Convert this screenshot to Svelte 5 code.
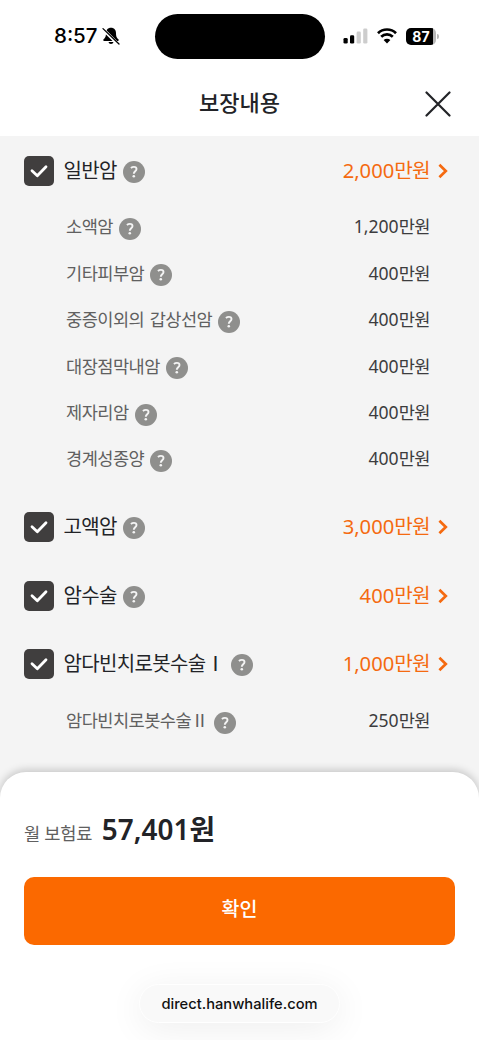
<script lang="ts">
  interface SubItem {
    name: string;
    amount: string;
  }

  interface Coverage extends SubItem {
    checked: boolean;
    subs: SubItem[];
  }

  let coverages: Coverage[] = $state([
    {
      name: '일반암',
      amount: '2,000',
      checked: true,
      subs: [
        { name: '소액암', amount: '1,200' },
        { name: '기타피부암', amount: '400' },
        { name: '중증이외의 갑상선암', amount: '400' },
        { name: '대장점막내암', amount: '400' },
        { name: '제자리암', amount: '400' },
        { name: '경계성종양', amount: '400' },
      ],
    },
    { name: '고액암', amount: '3,000', checked: true, subs: [] },
    { name: '암수술', amount: '400', checked: true, subs: [] },
    {
      name: '암다빈치로봇수술Ⅰ',
      amount: '1,000',
      checked: true,
      subs: [{ name: '암다빈치로봇수술Ⅱ', amount: '250' }],
    },
  ]);
</script>

{#snippet help()}
  <button class="help" aria-label="도움말">
    <svg viewBox="0 0 22 22" width="22" height="22">
      <circle cx="11" cy="11" r="11" fill="#8f8f8d" />
      <path d="M7.900 7C8.900 6.200 9.900 5.900 10.900 5.900c1.700 0 2.600.9 2.600 2.200 0 2.100-2.700 2.300-2.700 4.600" fill="none" stroke="#f4f4f4" stroke-width="1.900" />
      <circle cx="10.800" cy="15.300" r="1.300" fill="#f4f4f4" />
    </svg>
  </button>
{/snippet}

<div class="screen">
  <div class="status-bar">
    <div class="clock">
      <span>8:57</span>
      <svg viewBox="0 0 18 18" width="18" height="18">
        <path d="M9 .8c-3.1 0-5 2.200-5 5.200 0 3.800-.8 4.700-2.400 6.300-.7.8-.3 1.700.6 1.700h13.600c.9 0 1.300-.9.6-1.700C14.800 10.700 14 9.800 14 6c0-3-1.900-5.200-5-5.200zM6.500 15h5c-.3 1.300-1.200 2-2.500 2s-2.200-.7-2.500-2z" fill="#000" />
        <path d="M1 2.200 16 17.200" stroke="#fff" stroke-width="3.200" />
        <path d="M1 1.600 17 17" stroke="#000" stroke-width="1.300" stroke-linecap="round" />
      </svg>
    </div>
    <div class="island"></div>
    <div class="indicators">
      <svg class="signal" viewBox="0 0 25 16" width="25" height="16">
        <rect x="0.500" y="10" width="4.200" height="5.500" rx="1.300" />
        <rect x="7" y="7.200" width="4.200" height="8.300" rx="1.300" />
        <rect x="13.600" y="3.600" width="4.200" height="11.900" rx="1.300" fill="#cdcdcd" />
        <rect x="20.200" y="0.500" width="4.200" height="15" rx="1.300" fill="#cdcdcd" />
      </svg>
      <svg class="wifi" viewBox="0 0 20 16" width="20" height="16">
        <path d="M1 5.200a12.800 12.800 0 0 1 18 0M4.200 8.700a8.300 8.300 0 0 1 11.600 0" fill="none" stroke="#000" stroke-width="2.700" />
        <path d="M10 15.500 6.600 12.100a4.900 4.900 0 0 1 6.800 0z" />
      </svg>
      <div class="battery">
        <span class="level">87</span>
        <span class="cap"></span>
      </div>
    </div>
  </div>

  <header>
    <h1>보장내용</h1>
    <button class="close" aria-label="닫기">
      <svg viewBox="0 0 26 26" width="26" height="26">
        <path d="M1.500 1.500 24.500 24.500M24.500 1.500 1.500 24.500" stroke="#222327" stroke-width="2.200" stroke-linecap="round" />
      </svg>
    </button>
  </header>

  <main>
    {#each coverages as item}
      <section>
        <div class="row">
          <button
            class="check"
            class:on={item.checked}
            role="checkbox"
            aria-checked={item.checked}
            aria-label={item.name}
            onclick={() => (item.checked = !item.checked)}
          >
            <svg viewBox="0 0 30 30" width="30" height="30">
              <path d="M8 14.800 13.300 19.800 22 10.800" fill="none" stroke="#fff" stroke-width="2.800" stroke-linecap="round" stroke-linejoin="round" />
            </svg>
          </button>
          <span class="name">{item.name}</span>
          {@render help()}
          <span class="amount">{item.amount}<span class="unit">만원</span></span>
          <svg class="arrow" viewBox="0 0 10 16" width="10" height="16">
            <path d="M1.400 1.800 7.800 8 1.400 14.200" fill="none" stroke="#f56a10" stroke-width="2.700" />
          </svg>
        </div>
        {#if item.subs.length}
          <ul>
            {#each item.subs as sub}
              <li>
                <span class="name">{sub.name}</span>
                {@render help()}
                <span class="amount">{sub.amount}<span class="unit">만원</span></span>
              </li>
            {/each}
          </ul>
        {/if}
      </section>
    {/each}
  </main>

  <footer>
    <div class="premium">
      <span class="label">월 보험료</span>
      <strong>57,401<span>원</span></strong>
    </div>
    <button class="confirm">확인</button>
    <div class="address">direct.hanwhalife.com</div>
  </footer>
</div>

<style>
  :global(body) {
    margin: 0;
    background: #fff;
  }

  .screen {
    display: flex;
    flex-direction: column;
    width: 479px;
    height: 1040px;
    overflow: hidden;
    background: #f4f4f4;
    color: #222327;
    font-family: 'Noto Sans', 'Noto Sans CJK KR', sans-serif;
  }

  button {
    padding: 0;
    border: 0;
    background: none;
    font-family: inherit;
    cursor: pointer;
  }

  svg {
    display: block;
  }

  .status-bar {
    display: grid;
    grid-template-columns: 155px 170px 1fr;
    align-items: center;
    flex: none;
    height: 72px;
    background: #fff;
  }

  .clock {
    display: flex;
    align-items: center;
    gap: 4px;
    padding-left: 54px;
    color: #000;
    font: 500 20.5px/24px Inter, sans-serif;
  }

  .island {
    height: 45px;
    border-radius: 23px;
    background: #000;
  }

  .indicators {
    display: flex;
    align-items: center;
    padding-left: 18px;
  }

  .wifi {
    margin-left: 9px;
  }

  .battery {
    display: flex;
    align-items: center;
    gap: 1px;
    margin-left: 9px;
  }

  .level {
    width: 30px;
    height: 17px;
    border-radius: 5px;
    background: linear-gradient(90deg, #000 27px, #b8b8b8 27px);
    color: #fff;
    font: 700 14px/17px Inter, sans-serif;
    text-align: center;
  }

  .cap {
    width: 2px;
    height: 5px;
    border-radius: 0 2px 2px 0;
    background: #b8b8b8;
  }

  header {
    display: grid;
    grid-template-columns: 1fr auto 1fr;
    align-items: center;
    flex: none;
    height: 64.400px;
    background: #fff;
  }

  h1 {
    grid-column: 2;
    margin: 0;
    padding-bottom: 4px;
    font-size: 22px;
    font-weight: 500;
    line-height: 30px;
  }

  .close {
    justify-self: end;
    margin-right: 28px;
  }

  main {
    flex: none;
    height: 635.600px;
  }

  .row {
    display: flex;
    align-items: center;
    height: 68.500px;
    padding: 0 31px 0 24px;
  }

  .check {
    width: 30px;
    height: 30px;
    margin-right: 9.500px;
    border-radius: 5px;
    background: #c4c4c4;
  }

  .check.on {
    background: #403e3e;
  }

  .name {
    white-space: pre;
  }

  .row .name {
    font-size: 20px;
    line-height: 30px;
    letter-spacing: -0.65px;
  }

  .help {
    flex: none;
    width: 22px;
    height: 22px;
    margin: 2px 0 0 6px;
  }

  .amount {
    margin-left: auto;
  }

  .row .amount {
    padding-bottom: 2px;
    color: #f56a10;
    font-size: 20.200px;
    line-height: 30px;
  }

  .row .unit {
    letter-spacing: -0.7px;
  }

  .arrow {
    margin-left: 8px;
  }

  ul {
    margin: 0;
    padding: 0 0 10px;
    list-style: none;
  }

  li {
    display: flex;
    align-items: center;
    height: 46.400px;
    padding: 0 49px 0 66px;
    color: #3c3c3e;
    font-size: 17.600px;
    line-height: 26px;
  }

  li .name,
  li .amount {
    padding-bottom: 3.500px;
  }

  li .name {
    color: #606060;
    letter-spacing: -0.55px;
    word-spacing: 1.500px;
  }

  li .unit {
    letter-spacing: -0.5px;
  }

  footer {
    display: flex;
    flex-direction: column;
    flex: 1;
    padding: 0 24px;
    border-radius: 26px 26px 0 0;
    background: #fff;
    box-shadow: 0 -2px 9px rgba(0, 0, 0, 0.2);
  }

  .premium {
    display: flex;
    align-items: baseline;
    gap: 9.500px;
    height: 104.700px;
    line-height: 115px;
  }

  .label {
    color: #606060;
    font-size: 17.600px;
    letter-spacing: -0.2px;
  }

  strong {
    font-size: 27.900px;
    font-weight: 600;
  }

  .confirm {
    flex: none;
    height: 68px;
    padding-bottom: 6px;
    border-radius: 10px;
    background: #fb6900;
    color: #fff;
    font-size: 19.500px;
    font-weight: 500;
  }

  .address {
    align-self: center;
    width: 201px;
    height: 39px;
    margin-top: 39.500px;
    border: 1.500px solid #fff;
    border-radius: 20px;
    box-sizing: border-box;
    background: #f9f9f9;
    box-shadow: 0 6px 36px rgba(0, 0, 0, 0.07);
    color: #111;
    font: 500 14.700px/38px Inter, sans-serif;
    text-align: center;
  }
</style>
